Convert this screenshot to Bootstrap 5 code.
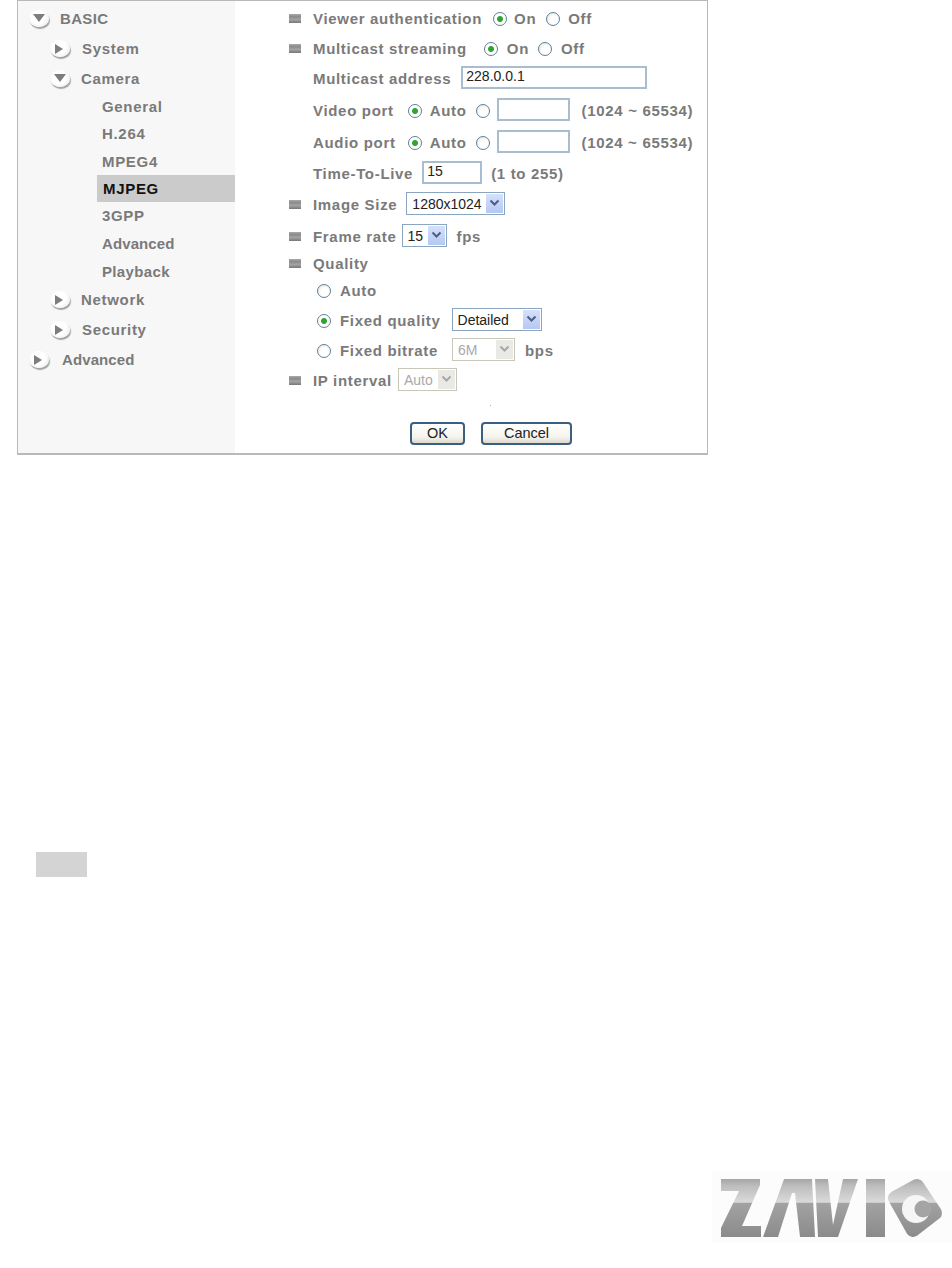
<!DOCTYPE html>
<html lang="en">
<head>
  <meta charset="UTF-8">
  <meta name="viewport" content="width=device-width, initial-scale=1.0">
  <title>MJPEG settings</title>
  <link rel="stylesheet" href="https://cdn.jsdelivr.net/npm/bootstrap@5.3.0/dist/css/bootstrap.min.css">
  <style>
    body {
      background: #fff;
      font-family: "Liberation Sans", Arial, sans-serif;
      font-size: 15px;
      font-weight: 700;
      letter-spacing: .68px;
      color: #7a7a7a;
    }
    .cam-frame {
      width: 691px;
      height: 455px;
      margin-left: 17px;
      border: 1px solid #b9b9b9;
      border-bottom-width: 2px;
    }
    .side-menu {
      width: 217px;
      padding-top: 4px;
      background: #f7f7f7;
    }
    .menu-row {
      height: 27px;
      padding-top: 2px;
      display: flex;
      align-items: center;
    }
    .lvl0 { padding-left: 11px; }
    .lvl1 { padding-left: 32px; }
    .lvl2 { padding-left: 84px; }
    .menu-row.active-row {
      margin-left: 79px;
      padding-left: 6px;
      background: #cbcbcb;
      color: #111;
    }
    .tight { letter-spacing: .1px; }
    .tight2 { letter-spacing: .35px; }
    .tw {
      width: 20px;
      height: 17px;
      flex: none;
      margin: 0 11px 2px 0;
      display: flex;
      align-items: center;
      justify-content: center;
      border-radius: 50%;
      background: radial-gradient(circle at 45% 40%, #fff 45%, #e4e4e4 100%);
      box-shadow: 1px 2px 1px #a2a2a2;
    }
    .tw-right::after {
      content: "";
      margin-right: 3px;
      border-left: 8px solid #7d7d7d;
      border-top: 5px solid transparent;
      border-bottom: 5px solid transparent;
    }
    .tw-down::after {
      content: "";
      margin-bottom: 2px;
      border-top: 8px solid #7d7d7d;
      border-left: 6px solid transparent;
      border-right: 6px solid transparent;
    }
    .form-pane { padding: 6px 0 0 54px; }
    .f-row {
      height: 22px;
      padding-top: 2px;
      display: flex;
      align-items: center;
      white-space: nowrap;
    }
    .sq {
      width: 12px;
      height: 9px;
      flex: none;
      margin: 0 12px 2px 0;
      background: linear-gradient(#aaa, #8a8a8a 30%, #a4a4a4 60%, #777);
    }
    .ind { padding-left: 24px; }
    .ind2 { padding-left: 28px; }
    .xp-radio {
      appearance: none;
      width: 14px;
      height: 14px;
      flex: none;
      margin: 0;
      border: 1px solid #5f7f98;
      border-radius: 50%;
      background: radial-gradient(circle at 60% 60%, #fff 40%, #dcdcd6);
    }
    .xp-radio:checked {
      background: radial-gradient(circle, #2fa52f 0 2.5px, #fff 3.5px);
    }
    .xp-input {
      height: 23px;
      margin: 0 0 4px;
      padding: 0 3px 2px;
      border: 2px solid #a9bdd0;
      border-radius: 0;
      font-size: 14px;
      font-weight: 400;
      letter-spacing: 0;
      color: #222;
      background: #fff;
      outline: 0;
    }
    .w-addr { width: 186px; }
    .w-port { width: 73px; }
    .w-ttl { width: 60px; }
    .sel-box {
      height: 23px;
      margin-bottom: 4px;
      display: inline-flex;
      align-items: stretch;
      padding: 1px;
      border: 1px solid #8aa5bf;
      background: #fff;
    }
    .sel-box select {
      appearance: none;
      flex: 1 1 auto;
      min-width: 0;
      padding: 0 0 2px 4px;
      border: 0;
      outline: 0;
      background: transparent;
      font-size: 14px;
      font-weight: 400;
      letter-spacing: 0;
      color: #222;
    }
    .sel-arrow {
      width: 17px;
      flex: none;
      display: flex;
      align-items: center;
      justify-content: center;
      background: linear-gradient(#d5e0fb, #b5c8f3);
      color: #4a5f86;
    }
    .sel-off { border-color: #c9c7ba; }
    .sel-off select { color: #a9a9a9; opacity: 1; }
    .sel-off .sel-arrow { background: #e9e9e5; color: #a8a8a8; }
    .w-size { width: 99px; }
    .w-rate { width: 45px; }
    .w-qual { width: 90px; }
    .w-brate { width: 63px; }
    .w-ip { width: 59px; }
    .spec-dot {
      width: 1px;
      height: 1px;
      margin: 14px 0 0 201px;
      background: #b0b0b0;
    }
    .btn-line {
      margin: 16px 0 0 121px;
      display: flex;
      gap: 16px;
    }
    .xp-btn {
      height: 23px;
      padding: 0;
      border: 2px solid #3a5f80;
      border-radius: 4px;
      background: linear-gradient(#fff, #f4f3ec 70%, #dcd9cc);
      font-size: 14.5px;
      font-weight: 400;
      letter-spacing: 0;
      line-height: 1;
      color: #222;
    }
    .xp-btn:hover { background: #fff; border-color: #3a5f80; color: #222; }
    .w-ok { width: 55px; }
    .w-cancel { width: 91px; }
    .gray-note {
      width: 51px;
      height: 25px;
      margin: 397px 0 0 36px;
      background: #d4d4d4;
    }
    .logo-wrap { margin-top: 294px; }
    /* spacing steps the picture needs, bootstrap's scale is too coarse */
    .t1 { margin-top: 1px; } .t3 { margin-top: 3px; }
    .t5 { margin-top: 5px; } .t8 { margin-top: 8px; }
    .t9 { margin-top: 9px; } .t10 { margin-top: 10px; }
    .l1 { margin-left: 1px; } .l2 { margin-left: 2px; }
    .l5 { margin-left: 5px; } .l6 { margin-left: 6px; } .l7 { margin-left: 7px; }
    .l8 { margin-left: 8px; } .l9 { margin-left: 9px; } .l10 { margin-left: 10px; }
    .l11 { margin-left: 11px; } .l12 { margin-left: 12px; }
    .l14 { margin-left: 14px; } .l17 { margin-left: 17px; }
  </style>
</head>
<body class="m-0">
  <div class="cam-frame d-flex">
    <!-- left menu -->
    <div class="side-menu">
      <div class="menu-row lvl0"><span class="tw tw-down"></span><span class="tight2">BASIC</span></div>
      <div class="menu-row lvl1 t3"><span class="tw tw-right"></span><span class="l1">System</span></div>
      <div class="menu-row lvl1 t3"><span class="tw tw-down"></span>Camera</div>
      <div class="menu-row lvl2 t1">General</div>
      <div class="menu-row lvl2">H.264</div>
      <div class="menu-row lvl2 t1">MPEG4</div>
      <div class="menu-row lvl2 active-row">MJPEG</div>
      <div class="menu-row lvl2">3GPP</div>
      <div class="menu-row lvl2 t1 tight">Advanced</div>
      <div class="menu-row lvl2 t1 tight2">Playback</div>
      <div class="menu-row lvl1 t1"><span class="tw tw-right"></span>Network</div>
      <div class="menu-row lvl1 t3"><span class="tw tw-right"></span><span class="l1">Security</span></div>
      <div class="menu-row lvl0 t3"><span class="tw tw-right"></span><span class="l2 tight">Advanced</span></div>
    </div>

    <!-- settings form -->
    <form class="form-pane flex-grow-1">
      <div class="f-row"><span class="sq"></span>Viewer authentication
        <input class="xp-radio l11" type="radio" name="auth" checked><span class="l7">On</span>
        <input class="xp-radio l10" type="radio" name="auth"><span class="l8">Off</span>
      </div>
      <div class="f-row t8"><span class="sq"></span>Multicast streaming
        <input class="xp-radio l17" type="radio" name="multi" checked><span class="l9">On</span>
        <input class="xp-radio l9" type="radio" name="multi"><span class="l9">Off</span>
      </div>
      <div class="f-row t8 ind">Multicast address
        <input class="xp-input w-addr l10" type="text" value="228.0.0.1">
      </div>
      <div class="f-row t10 ind">Video port
        <input class="xp-radio l14" type="radio" name="vport" checked><span class="l8">Auto</span>
        <input class="xp-radio l9" type="radio" name="vport">
        <input class="xp-input w-port l7" type="text"><span class="l12">(1024 ~ 65534)</span>
      </div>
      <div class="f-row t10 ind">Audio port
        <input class="xp-radio l12" type="radio" name="aport" checked><span class="l8">Auto</span>
        <input class="xp-radio l9" type="radio" name="aport">
        <input class="xp-input w-port l7" type="text"><span class="l12">(1024 ~ 65534)</span>
      </div>
      <div class="f-row t9 ind">Time-To-Live
        <input class="xp-input w-ttl l9" type="text" value="15"><span class="l9">(1 to 255)</span>
      </div>
      <div class="f-row t9"><span class="sq"></span>Image Size
        <span class="sel-box w-size l9"><select><option>1280x1024</option></select>
          <span class="sel-arrow"><svg width="11" height="8" viewBox="0 0 11 8"><path d="M1.5 1.5 5.5 5.5 9.5 1.5" fill="none" stroke="currentColor" stroke-width="2"/></svg></span></span>
      </div>
      <div class="f-row t10"><span class="sq"></span>Frame rate
        <span class="sel-box w-rate l5"><select><option>15</option></select>
          <span class="sel-arrow"><svg width="11" height="8" viewBox="0 0 11 8"><path d="M1.5 1.5 5.5 5.5 9.5 1.5" fill="none" stroke="currentColor" stroke-width="2"/></svg></span></span>
        <span class="l10">fps</span>
      </div>
      <div class="f-row t5"><span class="sq"></span>Quality</div>
      <div class="f-row t5 ind2">
        <input class="xp-radio" type="radio" name="qual"><span class="l9">Auto</span>
      </div>
      <div class="f-row t8 ind2">
        <input class="xp-radio" type="radio" name="qual" checked><span class="l9">Fixed quality</span>
        <span class="sel-box w-qual l11"><select><option>Detailed</option></select>
          <span class="sel-arrow"><svg width="11" height="8" viewBox="0 0 11 8"><path d="M1.5 1.5 5.5 5.5 9.5 1.5" fill="none" stroke="currentColor" stroke-width="2"/></svg></span></span>
      </div>
      <div class="f-row t8 ind2">
        <input class="xp-radio" type="radio" name="qual"><span class="l9">Fixed bitrate</span>
        <span class="sel-box sel-off w-brate l14"><select disabled><option>6M</option></select>
          <span class="sel-arrow"><svg width="11" height="8" viewBox="0 0 11 8"><path d="M1.5 1.5 5.5 5.5 9.5 1.5" fill="none" stroke="currentColor" stroke-width="2"/></svg></span></span>
        <span class="l10">bps</span>
      </div>
      <div class="f-row t8"><span class="sq"></span>IP interval
        <span class="sel-box sel-off w-ip l6"><select disabled><option>Auto</option></select>
          <span class="sel-arrow"><svg width="11" height="8" viewBox="0 0 11 8"><path d="M1.5 1.5 5.5 5.5 9.5 1.5" fill="none" stroke="currentColor" stroke-width="2"/></svg></span></span>
      </div>
      <div class="spec-dot"></div>
      <div class="btn-line">
        <button type="button" class="btn xp-btn w-ok">OK</button>
        <button type="button" class="btn xp-btn w-cancel">Cancel</button>
      </div>
    </form>
  </div>

  <div class="gray-note"></div>

  <div class="logo-wrap d-flex justify-content-end">
    <svg width="240" height="72" viewBox="12 33 240 72" role="img" aria-label="Zavio logo">
      <defs>
        <linearGradient id="lg" gradientUnits="userSpaceOnUse" x1="0" y1="41" x2="0" y2="99">
          <stop offset="0" stop-color="#a6a6a6"/>
          <stop offset=".12" stop-color="#bdbdbd"/>
          <stop offset=".4" stop-color="#dadada"/>
          <stop offset=".42" stop-color="#a2a2a2"/>
          <stop offset="1" stop-color="#8b8b8b"/>
        </linearGradient>
      </defs>
      <rect x="12" y="33" width="240" height="72" fill="#fcfcfc"/>
      <g fill="url(#lg)">
        <polygon points="21,41 60,41 60,47 42,88 61,88 61,99 21,99 21,90 39,53 21,53"/>
        <polygon points="63,99 84,41 112,41 115,99 100,99 95,55 92,55 78,99"/>
        <polygon points="115,41 128,41 133,87 143,41 158,41 138,99 118,99"/>
        <rect x="166" y="41" width="19" height="58"/>
        <polygon points="195,60 217,48 235,75 213,92" stroke="url(#lg)" stroke-width="14" stroke-linejoin="round"/>
      </g>
      <circle cx="216" cy="71" r="14" fill="#f6f6f6"/>
      <circle cx="223" cy="71" r="8.5" fill="#a4a4a4"/>
    </svg>
  </div>

  <script src="https://cdn.jsdelivr.net/npm/bootstrap@5.3.0/dist/js/bootstrap.bundle.min.js"></script>
</body>
</html>
